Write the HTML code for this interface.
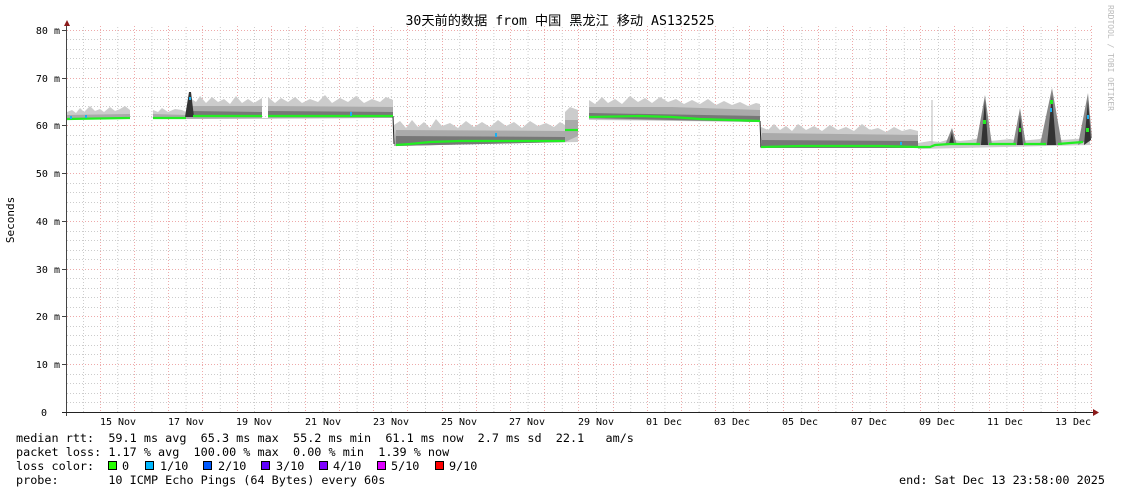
<!DOCTYPE html>
<html><head><meta charset="utf-8"><style>
body{margin:0;background:#fff;width:1121px;height:494px;overflow:hidden}
svg{display:block}
.m{font-family:"DejaVu Sans Mono","Liberation Mono","Noto Sans CJK SC",monospace}
.pre{white-space:pre}
</style></head><body>
<svg width="1121" height="494" viewBox="0 0 1121 494" xmlns="http://www.w3.org/2000/svg">
<rect width="1121" height="494" fill="#fff"/>
<defs>
<pattern id="vg" x="83" y="0" width="34.2" height="494" patternUnits="userSpaceOnUse"><line x1="0.5" y1="0" x2="0.5" y2="494" stroke="#ccc" stroke-dasharray="1,2"/></pattern>
</defs>
<g stroke-dasharray="1,2" stroke-width="1">
<g stroke="#ccc">
<line x1="67" y1="39.5" x2="1093" y2="39.5"/><line x1="67" y1="49.5" x2="1093" y2="49.5"/><line x1="67" y1="58.5" x2="1093" y2="58.5"/><line x1="67" y1="68.5" x2="1093" y2="68.5"/>
<line x1="67" y1="87.5" x2="1093" y2="87.5"/><line x1="67" y1="97.5" x2="1093" y2="97.5"/><line x1="67" y1="106.5" x2="1093" y2="106.5"/><line x1="67" y1="116.5" x2="1093" y2="116.5"/>
<line x1="67" y1="135.5" x2="1093" y2="135.5"/><line x1="67" y1="144.5" x2="1093" y2="144.5"/><line x1="67" y1="154.5" x2="1093" y2="154.5"/><line x1="67" y1="163.5" x2="1093" y2="163.5"/>
<line x1="67" y1="183.5" x2="1093" y2="183.5"/><line x1="67" y1="192.5" x2="1093" y2="192.5"/><line x1="67" y1="202.5" x2="1093" y2="202.5"/><line x1="67" y1="211.5" x2="1093" y2="211.5"/>
<line x1="67" y1="231.5" x2="1093" y2="231.5"/><line x1="67" y1="240.5" x2="1093" y2="240.5"/><line x1="67" y1="250.5" x2="1093" y2="250.5"/><line x1="67" y1="259.5" x2="1093" y2="259.5"/>
<line x1="67" y1="278.5" x2="1093" y2="278.5"/><line x1="67" y1="288.5" x2="1093" y2="288.5"/><line x1="67" y1="297.5" x2="1093" y2="297.5"/><line x1="67" y1="307.5" x2="1093" y2="307.5"/>
<line x1="67" y1="326.5" x2="1093" y2="326.5"/><line x1="67" y1="335.5" x2="1093" y2="335.5"/><line x1="67" y1="345.5" x2="1093" y2="345.5"/><line x1="67" y1="354.5" x2="1093" y2="354.5"/>
<line x1="67" y1="374.5" x2="1093" y2="374.5"/><line x1="67" y1="383.5" x2="1093" y2="383.5"/><line x1="67" y1="393.5" x2="1093" y2="393.5"/><line x1="67" y1="402.5" x2="1093" y2="402.5"/>
</g>
</g>
<rect x="67" y="26" width="1026" height="386" fill="url(#vg)"/>
<g stroke="#eaa" stroke-dasharray="1,2">
<line x1="67" y1="30.5" x2="1093" y2="30.5"/><line x1="67" y1="78.5" x2="1093" y2="78.5"/><line x1="67" y1="125.5" x2="1093" y2="125.5"/><line x1="67" y1="173.5" x2="1093" y2="173.5"/><line x1="67" y1="221.5" x2="1093" y2="221.5"/><line x1="67" y1="269.5" x2="1093" y2="269.5"/><line x1="67" y1="316.5" x2="1093" y2="316.5"/><line x1="67" y1="364.5" x2="1093" y2="364.5"/>
<line x1="100.5" y1="26" x2="100.5" y2="412"/><line x1="134.5" y1="26" x2="134.5" y2="412"/><line x1="168.5" y1="26" x2="168.5" y2="412"/><line x1="202.5" y1="26" x2="202.5" y2="412"/><line x1="237.5" y1="26" x2="237.5" y2="412"/><line x1="271.5" y1="26" x2="271.5" y2="412"/><line x1="305.5" y1="26" x2="305.5" y2="412"/><line x1="339.5" y1="26" x2="339.5" y2="412"/><line x1="373.5" y1="26" x2="373.5" y2="412"/><line x1="407.5" y1="26" x2="407.5" y2="412"/><line x1="442.5" y1="26" x2="442.5" y2="412"/><line x1="476.5" y1="26" x2="476.5" y2="412"/><line x1="510.5" y1="26" x2="510.5" y2="412"/><line x1="544.5" y1="26" x2="544.5" y2="412"/><line x1="578.5" y1="26" x2="578.5" y2="412"/><line x1="613.5" y1="26" x2="613.5" y2="412"/><line x1="647.5" y1="26" x2="647.5" y2="412"/><line x1="681.5" y1="26" x2="681.5" y2="412"/><line x1="715.5" y1="26" x2="715.5" y2="412"/><line x1="749.5" y1="26" x2="749.5" y2="412"/><line x1="783.5" y1="26" x2="783.5" y2="412"/><line x1="818.5" y1="26" x2="818.5" y2="412"/><line x1="852.5" y1="26" x2="852.5" y2="412"/><line x1="886.5" y1="26" x2="886.5" y2="412"/><line x1="920.5" y1="26" x2="920.5" y2="412"/><line x1="954.5" y1="26" x2="954.5" y2="412"/><line x1="989.5" y1="26" x2="989.5" y2="412"/><line x1="1023.5" y1="26" x2="1023.5" y2="412"/><line x1="1057.5" y1="26" x2="1057.5" y2="412"/><line x1="1091.5" y1="26" x2="1091.5" y2="412"/>
</g>
<!-- smoke -->
<g fill="#cccccc">
<polygon points="67,119 67,112 72,110 76,113 80,108 84,112 90,106 95,111 100,109 104,112 110,107 115,111 120,109 125,106 130,110 130,119"/>
<polygon points="153,119 153,110 158,112 162,108 168,112 175,109 182,110 186,112 190,98 196,102 200,96 206,103 212,97 218,102 224,99 230,104 236,96 242,103 248,99 254,103 262,98 262,118 268,118 268,97 275,103 281,98 288,102 295,97 302,103 310,99 318,102 325,95 332,103 340,98 348,102 356,96 364,103 372,99 380,102 386,97 393,100 393,118"/>
<polygon points="394,146 394,125 400,121 406,128 412,120 418,127 424,122 430,128 436,119 442,126 450,123 458,128 466,121 474,127 482,122 490,127 498,120 506,126 514,122 522,128 530,121 538,126 546,123 554,127 560,122 565,125 565,112 570,107 578,110 578,142"/>
<polygon points="589,120 589,100 595,104 602,97 608,103 615,99 622,104 630,96 638,102 645,98 652,103 660,97 668,102 676,99 684,104 692,100 700,104 708,99 716,105 724,101 732,105 740,102 748,106 756,103 760,104 760,122"/>
<polygon points="760,148 761,127 768,130 774,124 780,130 786,126 792,131 798,124 806,130 814,126 822,131 830,125 838,130 846,127 854,131 862,124 870,130 878,128 886,132 894,127 902,131 910,129 918,131 918,148"/>
<polygon points="918,149 918,143 930,141 940,142 950,139 960,141 970,140 980,138 990,141 1000,140 1010,139 1020,141 1030,140 1040,139 1060,140 1075,139 1090,138 1090,145 918,149"/>
</g>
<g fill="#aaaaaa">
<polygon points="67,119 67,115 130,114 130,119"/>
<polygon points="153,119 153,114 188,115 190,106 262,106 262,118 268,118 268,106 393,107 393,118"/>
<polygon points="394,146 396,130 565,131 565,120 578,120 578,136 565,142 394,146"/>
<polygon points="589,119 589,107 672,107 760,110 760,122"/>
<polygon points="760,148 762,133 918,135 918,148"/>
</g>
<g fill="#777777">
<polygon points="190,117 190,111 262,112 262,117"/>
<polygon points="268,117 268,111 393,112 393,117"/>
<polygon points="396,146 396,136 565,137 565,142"/>
<polygon points="589,118 589,113 760,116 760,122"/>
<polygon points="762,148 762,140 918,141 918,148"/>
</g>
<g fill="#888">
<polygon points="945,145 952,128 957,145"/>
<polygon points="976,145 985,95 992,145"/>
<polygon points="1013,145 1020,108 1026,145"/>
<polygon points="1040,145 1052,88 1062,145"/>
<polygon points="1078,145 1088,93 1092,138"/>
</g>
<g fill="#333">
<polygon points="185,117 189,92 191,92 194,117"/>
<polygon points="949,144 952,132 954,144"/>
<polygon points="981,145 985,100 988,145"/>
<polygon points="1017,145 1020,115 1023,145"/>
<polygon points="1047,145 1052,95 1056,145"/>
<polygon points="1084,145 1088,100 1091,140"/>
</g>
<line x1="932" y1="100" x2="932" y2="146" stroke="#bbb"/>
<line x1="393" y1="116" x2="394" y2="144" stroke="#222"/>
<line x1="760" y1="121" x2="761" y2="147" stroke="#222"/>
<!-- median -->
<g fill="none" stroke="#22ee22" stroke-width="2.2">
<polyline points="67,119 130,118"/>
<polyline points="153,118 186,118"/>
<polyline points="193,116 262,116"/>
<polyline points="268,116 393,116"/>
<polyline points="396,145 410,144 430,142 460,141 500,141 565,141"/>
<polyline points="565,130 578,130"/>
<polyline points="589,117 640,116 672,117 700,119 730,120 760,121"/>
<polyline points="761,147 800,146 850,146 880,146 918,147 930,147 935,145 950,144 980,144"/>
<polyline points="989,144 1016,144"/>
<polyline points="1024,144 1046,144"/>
<polyline points="1058,144 1070,143 1083,142"/>
</g>
<g fill="#22ee22"><rect x="983" y="120" width="3" height="4"/><rect x="1050" y="100" width="3" height="4"/><rect x="1086" y="128" width="3" height="4"/><rect x="1019" y="128" width="2" height="4"/></g>
<g fill="#1ab0f0">
<rect x="70" y="116" width="2" height="3"/><rect x="85" y="115" width="2" height="3"/><rect x="189" y="97" width="2" height="3"/><rect x="495" y="133" width="2" height="4"/><rect x="1050" y="108" width="2" height="4"/><rect x="1087" y="115" width="2" height="4"/><rect x="900" y="142" width="2" height="3"/><rect x="350" y="112" width="2" height="4"/>
</g>
<!-- axes -->
<line x1="66.5" y1="22" x2="66.5" y2="416" stroke="#444"/>
<line x1="62" y1="412.5" x2="1094" y2="412.5" stroke="#222"/>
<polygon points="64,26 67,20 70,26" fill="#8b1a1a"/>
<polygon points="1093,409 1099,412.5 1093,416" fill="#8b1a1a"/>
<g stroke="#444"><line x1="62" y1="30.5" x2="66" y2="30.5"/><line x1="62" y1="78.5" x2="66" y2="78.5"/><line x1="62" y1="125.5" x2="66" y2="125.5"/><line x1="62" y1="173.5" x2="66" y2="173.5"/><line x1="62" y1="221.5" x2="66" y2="221.5"/><line x1="62" y1="269.5" x2="66" y2="269.5"/><line x1="62" y1="316.5" x2="66" y2="316.5"/><line x1="62" y1="364.5" x2="66" y2="364.5"/></g>
<g class="m" font-size="10" fill="#000" text-anchor="end">
<text x="60" y="34">80 m</text><text x="60" y="82">70 m</text><text x="60" y="129">60 m</text><text x="60" y="177">50 m</text><text x="60" y="225">40 m</text><text x="60" y="273">30 m</text><text x="60" y="320">20 m</text><text x="60" y="368">10 m</text><text x="47" y="416">0</text>
</g>
<g class="m" font-size="10" fill="#000" text-anchor="middle">
<text x="118" y="425">15 Nov</text><text x="186" y="425">17 Nov</text><text x="254" y="425">19 Nov</text><text x="323" y="425">21 Nov</text><text x="391" y="425">23 Nov</text><text x="459" y="425">25 Nov</text><text x="527" y="425">27 Nov</text><text x="596" y="425">29 Nov</text><text x="664" y="425">01 Dec</text><text x="732" y="425">03 Dec</text><text x="800" y="425">05 Dec</text><text x="869" y="425">07 Dec</text><text x="937" y="425">09 Dec</text><text x="1005" y="425">11 Dec</text><text x="1073" y="425">13 Dec</text>
</g>
<text class="m" x="560" y="25" font-size="13.2" text-anchor="middle" fill="#000">30天前的数据 from 中国 黑龙江 移动 AS132525</text>
<text class="m" font-size="11" fill="#000" text-anchor="middle" transform="translate(14,220) rotate(-90)">Seconds</text>
<text class="m" font-size="8" fill="#bbb" transform="translate(1108,5) rotate(90)">RRDTOOL / TOBI OETIKER</text>
<g class="m pre" font-size="11.8" fill="#000">
<text class="pre" x="16" y="442">median rtt:  59.1 ms avg  65.3 ms max  55.2 ms min  61.1 ms now  2.7 ms sd  22.1   am/s</text>
<text class="pre" x="16" y="456">packet loss: 1.17 % avg  100.00 % max  0.00 % min  1.39 % now</text>
<text class="pre" x="16" y="470">loss color:</text>
<text class="pre" x="16" y="484">probe:       10 ICMP Echo Pings (64 Bytes) every 60s</text>
<text x="1105" y="484" text-anchor="end">end: Sat Dec 13 23:58:00 2025</text>
<text x="122" y="470">0</text><text x="160" y="470">1/10</text><text x="218" y="470">2/10</text><text x="276" y="470">3/10</text><text x="333" y="470">4/10</text><text x="391" y="470">5/10</text><text x="449" y="470">9/10</text>
</g>
<g stroke="#000" stroke-width="1">
<rect x="108.5" y="461.5" width="8" height="8" fill="#26ff00"/>
<rect x="145.5" y="461.5" width="8" height="8" fill="#00b8ff"/>
<rect x="203.5" y="461.5" width="8" height="8" fill="#0059ff"/>
<rect x="261.5" y="461.5" width="8" height="8" fill="#5e00ff"/>
<rect x="319.5" y="461.5" width="8" height="8" fill="#7e00ff"/>
<rect x="377.5" y="461.5" width="8" height="8" fill="#dd00ff"/>
<rect x="435.5" y="461.5" width="8" height="8" fill="#ff0000"/>
</g>
</svg>
</body></html>
